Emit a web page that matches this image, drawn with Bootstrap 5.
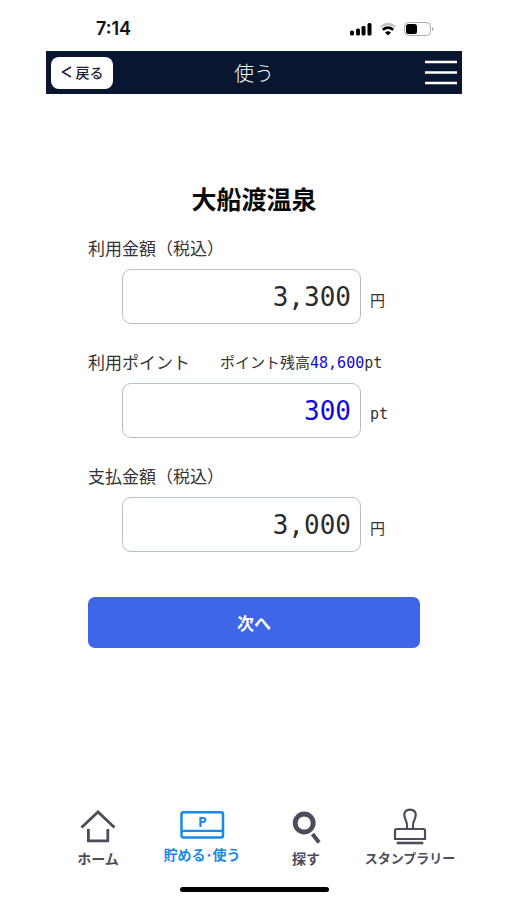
<!DOCTYPE html>
<html lang="ja">
<head>
<meta charset="utf-8">
<meta name="viewport" content="width=device-width, initial-scale=1">
<title>使う</title>
<link href="https://cdn.jsdelivr.net/npm/bootstrap@5.3.0/dist/css/bootstrap.min.css" rel="stylesheet">
<style>
body{font-family:"Noto Sans CJK JP",sans-serif;color:#333;background:#fff}
.shell{padding:0 45px 0 46px}
.status{height:51px;padding:6px 28px 0 50px;color:#111}
.clock{font:600 18px/24px Inter,sans-serif}
.topbar{height:43px;background:#08172f;padding:0 5px}
.side{flex:1 1 0}
.back{background:#fff;color:#1c2238;border:0;border-radius:8px;height:32px;width:62px;font-size:14px;font-weight:500;line-height:20px;padding:0 0 2px}
.heading{font-size:20px;font-weight:300;line-height:28px;color:#fff}
.menu{border:0;background:none;padding:0}
.content{padding:86px 42px 0}
.shop{font-size:25px;font-weight:700;line-height:36px;color:#0a0a0a;margin-bottom:20px}
.fields{display:grid;grid-template-columns:minmax(0,1fr);gap:26px}
.caption{font-size:17px;line-height:24px;margin-bottom:9px}
.balance{font-size:15px;line-height:24px;margin-left:30px}
.figures{font-family:"DejaVu Sans Mono","Noto Sans CJK JP",monospace}
.balance .figures{line-height:20px}
.blue,.amount.blue{color:#1008dc}
.entry{padding:0 26px 0 34px}
.amount{height:55px;border:1px solid #b4bfca;border-radius:9px;font-size:26px;line-height:36px;text-align:right;padding:0 9px;color:#2b2b2b;flex:1 1 0;min-width:0}
.unit{width:24px;margin-left:9px;font-size:15px;line-height:20px;padding-top:7px}
.next{margin-top:45px;height:51px;background:#3e66e8;border:0;border-radius:7px;color:#fff;font-size:17px;font-weight:700}
.tabs{padding-bottom:19px}
.tab{flex:1 1 0;color:#4d4c5c;font-size:14px;font-weight:600;line-height:20px;text-decoration:none;white-space:nowrap}
.tab.current{color:#1789ea}
.tab.long{font-size:13px}
.tab svg{height:40px;width:48px}
.tab.current svg{height:36px}
.homebar{width:149px;height:5px;border-radius:3px;background:#000;margin-bottom:8px}
</style>
<script src="https://cdn.jsdelivr.net/npm/bootstrap@5.3.0/dist/js/bootstrap.bundle.min.js"></script>
</head>
<body>
<div class="shell d-flex flex-column min-vh-100">
  <div class="status d-flex align-items-center justify-content-between">
    <span class="clock">7:14</span>
    <svg width="85" height="16" viewBox="0 0 85 16" aria-hidden="true">
      <g fill="#000"><rect x="1" y="9.500" width="4" height="5" rx="1.500"/><rect x="7" y="7.500" width="4" height="7" rx="1.500"/><rect x="12.500" y="5" width="4" height="9.500" rx="1.500"/><rect x="18.500" y="2" width="4" height="12.500" rx="1.500"/></g>
      <path d="M31.500 6Q39 0 46.500 6" fill="none" stroke="#c4c4c4" stroke-width="2.200"/>
      <path d="M33.800 8.700Q39 4.600 44.200 8.700" fill="none" stroke="#000" stroke-width="2.600"/>
      <path d="M36 11.500Q39 9 42 11.500L39 14.500Z" fill="#000"/>
      <rect x="55.500" y="1.500" width="26" height="13" rx="4" fill="none" stroke="#aaa"/><rect x="57" y="3" width="11" height="10" rx="2.500"/><path d="M83 6v4q1.500-.5 1.500-2t-1.500-2z" fill="#aaa"/>
    </svg>
  </div>
  <header class="topbar d-flex align-items-center">
    <div class="side"><button type="button" class="back d-flex align-items-center justify-content-center"><svg class="me-1" width="11" height="12" viewBox="0 0 11 12" fill="none" stroke="currentColor" stroke-width="1.600" aria-hidden="true"><path d="M10 1 1.500 6 10 11"/></svg>戻る</button></div>
    <h1 class="heading m-0">使う</h1>
    <div class="side d-flex justify-content-end"><button type="button" class="menu d-flex" aria-label="メニュー"><svg width="32" height="26" viewBox="0 0 32 26" stroke="#fff" stroke-width="2.500"><path d="M0 2h32M0 12.500h32M0 23h32"/></svg></button></div>
  </header>
  <main class="content">
    <h2 class="shop text-center">大船渡温泉</h2>
    <form>
      <div class="fields">
        <div>
          <label class="caption d-block" for="total">利用金額（税込）</label>
          <div class="entry d-flex align-items-center"><input id="total" class="amount figures" type="text" inputmode="numeric" value="3,300"><span class="unit">円</span></div>
        </div>
        <div>
          <div class="caption d-flex"><label for="points">利用ポイント</label><span class="balance">ポイント残高<span class="figures"><span class="blue">48,600</span>pt</span></span></div>
          <div class="entry d-flex align-items-center"><input id="points" class="amount figures blue" type="text" inputmode="numeric" value="300"><span class="unit figures">pt</span></div>
        </div>
        <div>
          <label class="caption d-block" for="pay">支払金額（税込）</label>
          <div class="entry d-flex align-items-center"><input id="pay" class="amount figures" type="text" inputmode="numeric" value="3,000"><span class="unit">円</span></div>
        </div>
      </div>
      <button type="button" class="next w-100">次へ</button>
    </form>
  </main>
  <nav class="tabs d-flex mt-auto">
    <a href="#" class="tab d-flex flex-column align-items-center"><svg viewBox="0 0 48 40" fill="none" stroke="currentColor" stroke-width="2.800"><path d="M7.500 19.500 24 4 40.500 19.500M14.400 21v11.800h19.400V21"/></svg>ホーム</a>
    <a href="#" class="tab current d-flex flex-column align-items-center" aria-current="page"><svg viewBox="0 0 48 36" fill="none" stroke="currentColor" stroke-width="2.500"><rect x="3.500" y="4.300" width="41.500" height="25.200" rx="2"/><path d="M3.500 22.800h41.500" stroke-width="2.200"/><text x="24.300" y="19" text-anchor="middle" fill="currentColor" stroke="none" font-family="Open Sans, sans-serif" font-weight="700" font-size="14">P</text></svg>貯める･使う</a>
    <a href="#" class="tab d-flex flex-column align-items-center"><svg viewBox="0 0 48 40" fill="none" stroke="currentColor"><circle cx="22.200" cy="15" r="9" stroke-width="4.800"/><path d="m30.500 26 6.500 8.500" stroke-width="4"/></svg>探す</a>
    <a href="#" class="tab long d-flex flex-column align-items-center"><svg viewBox="0 0 48 40" fill="none" stroke="currentColor" stroke-width="2.200"><path d="M21 20.500Q21.500 15 19.300 11C16.500 4.500 20 1.700 24 1.700s7.500 2.800 4.700 9.300Q26.500 15 27 20.500"/><path d="M10.500 21h27q1.500 0 1.500 1.500v8.500h-30v-8.500q0-1.500 1.500-1.500z"/><path d="M10.700 35h26.600" stroke-width="2.600"/></svg>スタンプラリー</a>
  </nav>
  <div class="homebar mx-auto"></div>
</div>
</body>
</html>
